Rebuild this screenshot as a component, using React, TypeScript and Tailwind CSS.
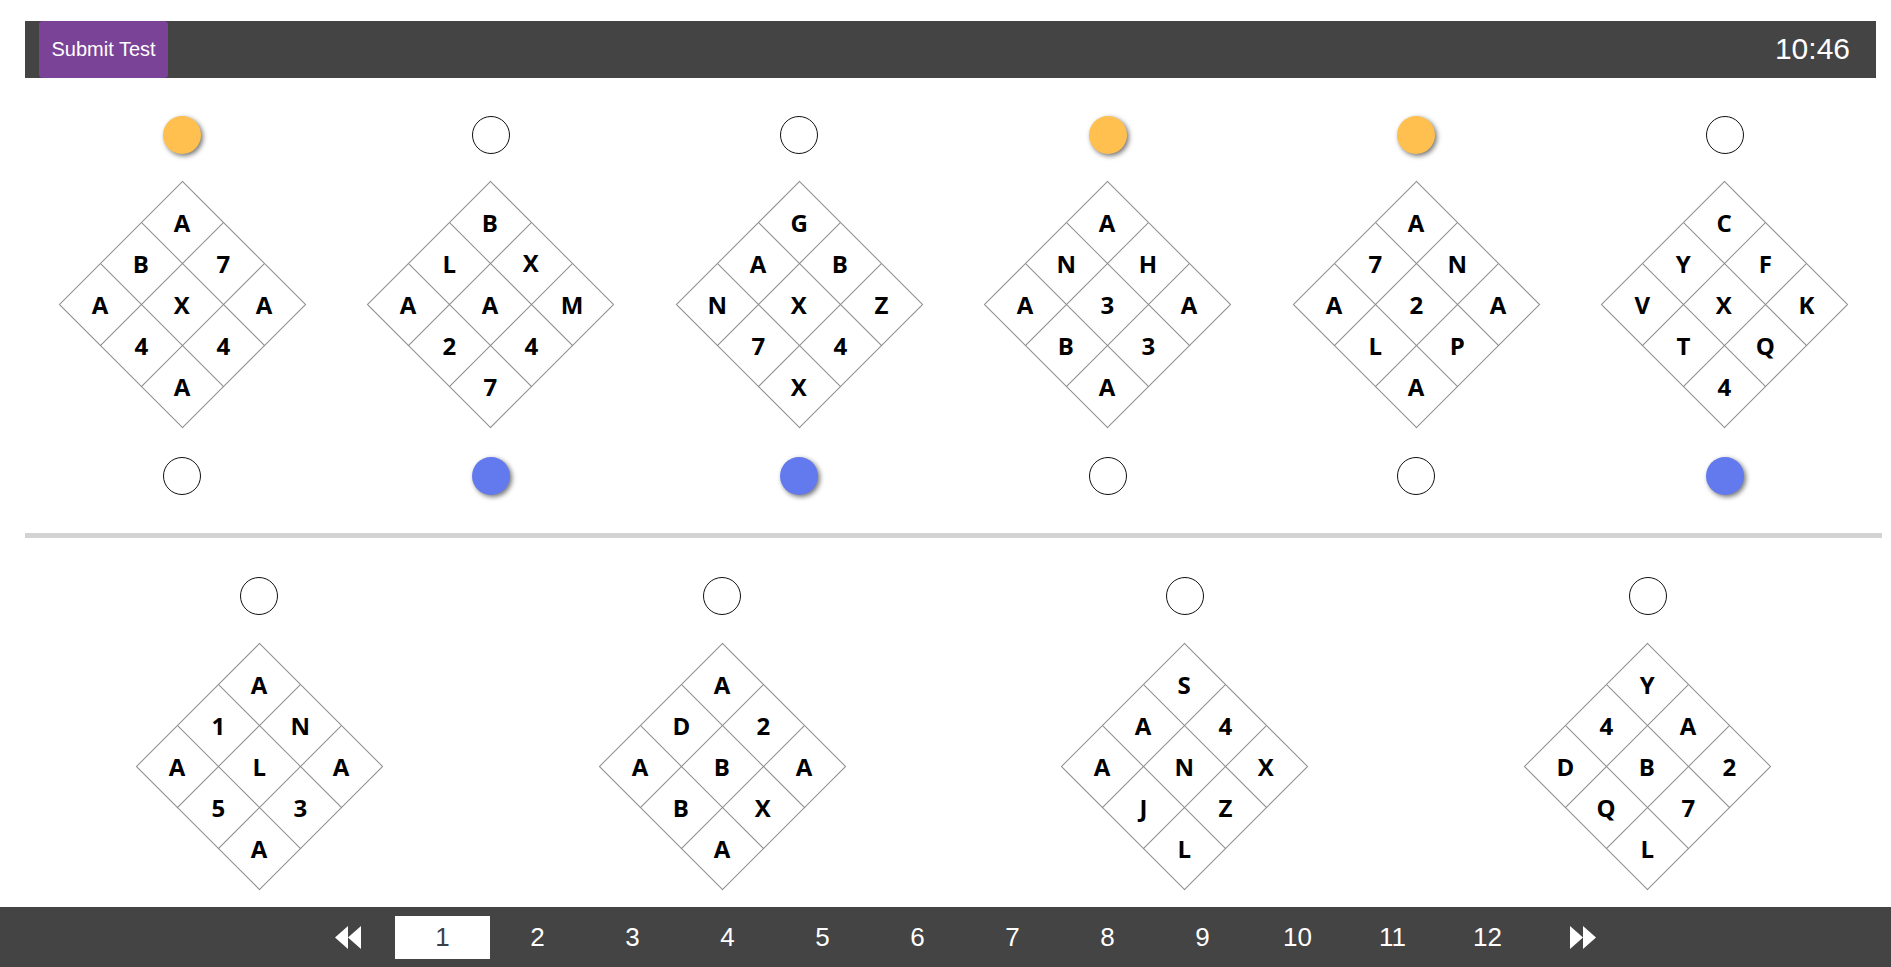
type Mark = "none" | "orange" | "blue";

interface Puzzle {
  cells: string[]; // top, row2 left, row2 right, left, center, right, row4 left, row4 right, bottom
  top: Mark;
  bottom?: Mark;
}

const topPuzzles: Puzzle[] = [
  { cells: ["A", "B", "7", "A", "X", "A", "4", "4", "A"], top: "orange", bottom: "none" },
  { cells: ["B", "L", "X", "A", "A", "M", "2", "4", "7"], top: "none", bottom: "blue" },
  { cells: ["G", "A", "B", "N", "X", "Z", "7", "4", "X"], top: "none", bottom: "blue" },
  { cells: ["A", "N", "H", "A", "3", "A", "B", "3", "A"], top: "orange", bottom: "none" },
  { cells: ["A", "7", "N", "A", "2", "A", "L", "P", "A"], top: "orange", bottom: "none" },
  { cells: ["C", "Y", "F", "V", "X", "K", "T", "Q", "4"], top: "none", bottom: "blue" },
];

const bottomPuzzles: Puzzle[] = [
  { cells: ["A", "1", "N", "A", "L", "A", "5", "3", "A"], top: "none" },
  { cells: ["A", "D", "2", "A", "B", "A", "B", "X", "A"], top: "none" },
  { cells: ["S", "A", "4", "A", "N", "X", "J", "Z", "L"], top: "none" },
  { cells: ["Y", "4", "A", "D", "B", "2", "Q", "7", "L"], top: "none" },
];

// visual order -> grid position (row-major) of the grid before it is turned 45deg
// top=(0,0) l2=(1,0) r2=(0,1) left=(2,0) center=(1,1) right=(0,2) l4=(2,1) r4=(1,2) bottom=(2,2)
const toGrid = (c: string[]) => [c[0], c[2], c[5], c[1], c[4], c[7], c[3], c[6], c[8]];

function Dot({ mark }: { mark: Mark }) {
  if (mark === "orange") {
    return <div className="w-[38px] h-[38px] rounded-full bg-[#ffc04f] shadow-[2px_2px_5px_rgba(0,0,0,0.55)]" />;
  }
  if (mark === "blue") {
    return <div className="w-[38px] h-[38px] rounded-full bg-[#627aee] shadow-[2px_2px_5px_rgba(0,0,0,0.55)]" />;
  }
  return <div className="w-[38px] h-[38px] rounded-full border border-[#111] bg-white" />;
}

function Diamond({ cells }: { cells: string[] }) {
  return (
    <div className="w-[247px] h-[247px] flex items-center justify-center">
      <div className="grid grid-cols-3 grid-rows-3 w-[175px] h-[175px] rotate-45 border-t border-l border-[#8c8c8c]">
        {toGrid(cells).map((ch, i) => (
          <div key={i} className="border-r border-b border-[#8c8c8c] flex items-center justify-center">
            <span className="-rotate-45 text-[24px] font-bold text-black font-['Open_Sans',sans-serif] leading-none">
              {ch}
            </span>
          </div>
        ))}
      </div>
    </div>
  );
}

function BackIcon() {
  return (
    <svg width="26" height="23" viewBox="0 0 26 23" fill="white">
      <polygon points="13,0 0,11.5 13,23" />
      <polygon points="26,0 13,11.5 26,23" />
    </svg>
  );
}

function ForwardIcon() {
  return (
    <svg width="26" height="23" viewBox="0 0 26 23" fill="white">
      <polygon points="0,0 13,11.5 0,23" />
      <polygon points="13,0 26,11.5 13,23" />
    </svg>
  );
}

export default function App() {
  const pages = [1, 2, 3, 4, 5, 6, 7, 8, 9, 10, 11, 12];

  return (
    <div className="w-[1891px] h-[967px] bg-white overflow-hidden flex flex-col font-['Liberation_Sans',Arial,sans-serif]">
      {/* Barra superior */}
      <div className="mt-[21px] ml-[25px] mr-[15px] h-[57px] bg-[#444444] flex items-center justify-between">
        <button className="ml-[14px] h-full w-[129px] bg-[#7b4397] rounded-[4px] text-white text-[20px]">
          Submit Test
        </button>
        <span className="mr-[26px] text-white text-[30px] leading-none">10:46</span>
      </div>

      {/* Fila superior */}
      <div className="ml-[28px] w-[1851px] grid grid-cols-6">
        {topPuzzles.map((p, i) => (
          <div key={i} className="flex flex-col items-center">
            <div className="mt-[38px]">
              <Dot mark={p.top} />
            </div>
            <div className="mt-[27px]">
              <Diamond cells={p.cells} />
            </div>
            <div className="mt-[29px]">
              <Dot mark={p.bottom ?? "none"} />
            </div>
          </div>
        ))}
      </div>

      <div className="mt-[38px] ml-[25px] w-[1857px] h-[6px] bg-[#d3d3d3]" />

      {/* Fila inferior */}
      <div className="ml-[28px] w-[1851px] grid grid-cols-4">
        {bottomPuzzles.map((p, i) => (
          <div key={i} className="flex flex-col items-center">
            <div className="mt-[39px]">
              <Dot mark={p.top} />
            </div>
            <div className="mt-[28px]">
              <Diamond cells={p.cells} />
            </div>
          </div>
        ))}
      </div>

      {/* Paginación */}
      <div className="mt-[17px] h-[60px] bg-[#444444] flex items-center justify-center pl-[39px]">
        <div className="w-[95px] h-[43px] flex items-center justify-center">
          <BackIcon />
        </div>
        {pages.map((n) => (
          <div
            key={n}
            className={
              n === 1
                ? "w-[95px] h-[43px] bg-white text-[#3a3f4a] text-[26px] flex items-center justify-center"
                : "w-[95px] h-[43px] text-white text-[26px] flex items-center justify-center"
            }
          >
            {n}
          </div>
        ))}
        <div className="w-[95px] h-[43px] flex items-center justify-center">
          <ForwardIcon />
        </div>
      </div>
    </div>
  );
}
